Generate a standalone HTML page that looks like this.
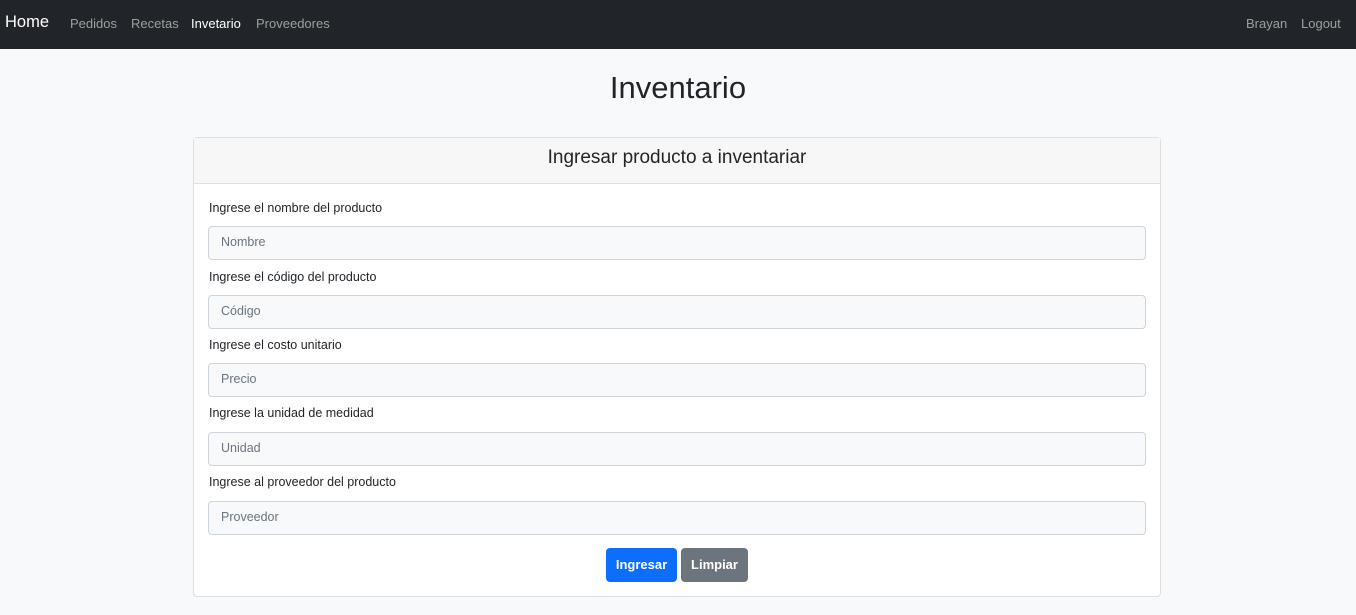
<!DOCTYPE html>
<html><head><meta charset="utf-8"><style>
*{box-sizing:border-box;margin:0;padding:0}
body{width:1356px;height:615px;background:#f8f9fa;font-family:"Liberation Sans",sans-serif;color:#212529;position:relative;overflow:hidden}
.nav{position:absolute;left:0;top:0;width:1356px;height:49px;background:#212529}
.nav span{position:absolute;top:16px;font-size:13px;color:rgba(255,255,255,.55)}
.nav .brand{top:13px;font-size:16.5px;color:#fff}
.nav .act{color:#fff}
h1{position:absolute;top:70px;left:0;width:1356px;text-align:center;font-weight:400;font-size:31px}
.card{position:absolute;left:193px;top:137px;width:968px;height:460px;border:1px solid #dfdfdf;border-radius:4px;background:#fff}
.ch{height:46px;background:#f7f7f7;border-bottom:1px solid #dfdfdf;text-align:center;font-size:19px;line-height:40px;padding-top:0}
label{position:absolute;left:15px;font-size:12.5px}
.in{position:absolute;left:14px;width:938px;height:34px;border:1px solid #ced4da;border-radius:4px;background:#f8f9fa;font-size:12.5px;color:#6c757d;padding:8px 12px}
.btn{position:absolute;top:410px;height:34px;border-radius:4px;color:#fff;font-size:13px;font-weight:bold;line-height:34px;text-align:center}
</style></head><body>
<div class="nav">
<span class="brand" style="left:5px">Home</span>
<span style="left:70px">Pedidos</span>
<span style="left:131px">Recetas</span>
<span class="act" style="left:191px">Invetario</span>
<span style="left:256px">Proveedores</span>
<span style="left:1246px">Brayan</span>
<span style="left:1301px">Logout</span>
</div>
<h1>Inventario</h1>
<div class="card">
<div class="ch">Ingresar producto a inventariar</div>
<label style="top:63px">Ingrese el nombre del producto</label>
<div class="in" style="top:88px">Nombre</div>
<label style="top:132px">Ingrese el código del producto</label>
<div class="in" style="top:157px">Código</div>
<label style="top:200px">Ingrese el costo unitario</label>
<div class="in" style="top:225px">Precio</div>
<label style="top:268px">Ingrese la unidad de medidad</label>
<div class="in" style="top:294px">Unidad</div>
<label style="top:337px">Ingrese al proveedor del producto</label>
<div class="in" style="top:363px">Proveedor</div>
<div class="btn" style="left:412px;width:71px;background:#0d6efd">Ingresar</div>
<div class="btn" style="left:487px;width:67px;background:#6c757d">Limpiar</div>
</div>
</body></html>
